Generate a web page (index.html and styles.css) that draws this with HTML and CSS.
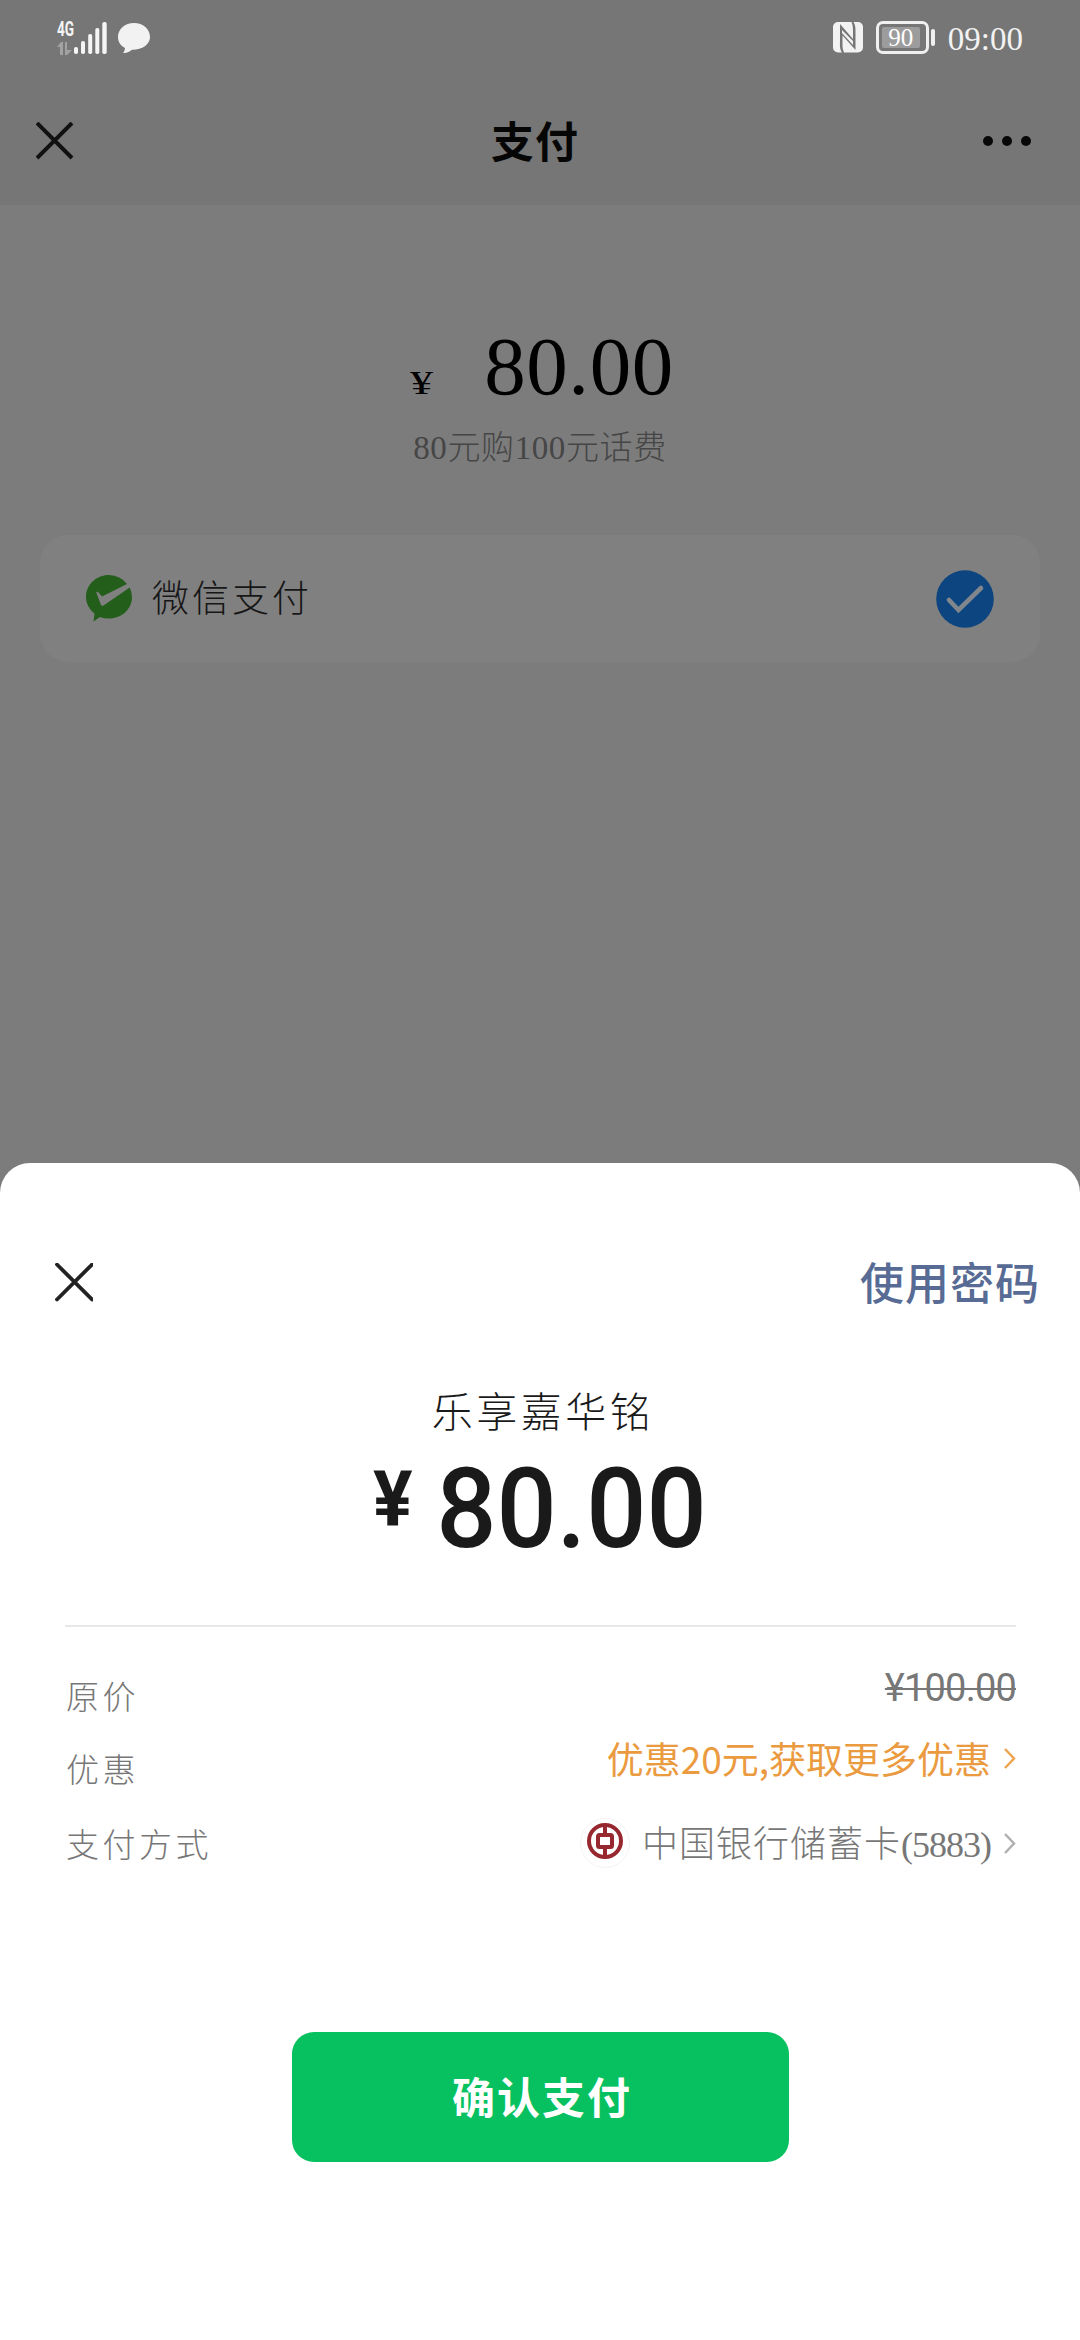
FILE: index.html
```html
<!DOCTYPE html>
<html lang="zh-CN">
<head>
<meta charset="utf-8">
<title>支付</title>
<link rel="stylesheet" href="styles.css">
</head>
<body>
<div class="screen">
  <header class="top">
    <div class="status">
      <div class="status-left">
        <div class="network">
          <span class="network-type">4G</span>
          <svg class="network-arrows" width="15" height="13" viewBox="0 0 15 13"><path d="M0 5 4 0h2v13H3V5zM8 0h2v8h5l-5 5H8z" fill="#a2a2a2"/></svg>
        </div>
        <svg class="bars" width="33" height="32" viewBox="0 0 33 32" fill="#f5f5f5"><rect y="25" width="4" height="7" rx="1.8"/><rect x="7" y="19" width="4" height="13" rx="1.8"/><rect x="14.2" y="12" width="4" height="20" rx="1.8"/><rect x="21.3" y="6" width="4" height="26" rx="1.8"/><rect x="28.3" y="0" width="4.4" height="32" rx="1.8"/></svg>
        <svg class="bubble" width="32" height="31" viewBox="0 0 32 31"><path d="M16 0C7 0 0 6 0 14c0 5 2.500 8.500 7 11-.2 2.200-.8 3.700-2 5 4 .3 6.500-1.200 9-3.200C24 27 32 21.500 32 14 32 6 25 0 16 0z" fill="#f2f2f2"/></svg>
      </div>
      <div class="status-right">
        <svg width="30" height="31" viewBox="0 0 30 31"><path d="M5 0h13.500c1.500 3 1.600 7 1.500 11v6L7 2v16c0 5-.5 9 2 12.500H5a5 5 0 0 1-5-5V5a5 5 0 0 1 5-5zM20.500 0H25a5 5 0 0 1 5 5v20.500a5 5 0 0 1-5 5H11c-1.500-3-1.600-7-1.500-11v-6L22.500 28V12c0-5 .3-8-2-12zM9 8l11 11v4L9 11z" fill="#f2f2f2"/></svg>
        <div class="battery"><div class="battery-level">90</div></div>
        <div class="battery-tip"></div>
        <span class="clock">09:00</span>
      </div>
    </div>
    <nav class="nav">
      <svg width="38" height="38" viewBox="0 0 38 38"><path d="M1 1 36 36M36 1 1 36" stroke="#111" stroke-width="4"/></svg>
      <h1 class="title">支付</h1>
      <svg width="50" height="12" viewBox="0 0 50 12" fill="#080808"><circle cx="7" cy="6" r="5"/><circle cx="26" cy="6" r="5"/><circle cx="45" cy="6" r="5"/></svg>
    </nav>
  </header>

  <main class="order">
    <div class="order-amount"><span class="order-yen">¥</span><span class="order-sum">80.00</span></div>
    <div class="order-name">80元购100元话费</div>
    <div class="method">
      <svg width="46" height="47" viewBox="0 0 46 47"><path d="M23 0a23 22 0 0 1 18 9L16 21.500l-4-4.500c-1-.7-2-.2-1.500 1l4.500 12c.5 1 1.500 1 2.500.4L43.700 12.500A22 22 0 0 1 46 22c0 12-10 21.500-23 21.500-3.500 0-6-.5-9-1.500l-6.500 4.500 1-8C3.500 34.500 0 28.500 0 22 0 10 10 0 23 0z" fill="#235f1b"/></svg>
      <span class="method-name">微信支付</span>
      <svg width="58" height="58" viewBox="0 0 58 58"><circle cx="29" cy="29" r="28.800" fill="#0c457f"/><path d="M13 30 22.500 40 45 18" fill="none" stroke="#80868c" stroke-width="4.600" stroke-linecap="round"/></svg>
    </div>
  </main>

  <section class="sheet">
    <div class="sheet-head">
      <svg width="38" height="40" viewBox="0 0 38 40"><path d="M2 1.500 37 36.500M37 1.500 2 36.500" stroke="#222" stroke-width="3.800" stroke-linecap="round"/></svg>
      <a class="use-password">使用密码</a>
    </div>
    <div class="payee">乐享嘉华铭</div>
    <div class="pay-amount"><span class="pay-yen">¥</span><span class="pay-sum">80.00</span></div>
    <div class="details">
      <div class="row row-price"><span class="label">原价</span><s class="old-price">¥100.00</s></div>
      <div class="row row-discount"><span class="label">优惠</span>
        <span class="value"><span class="discount">优惠20元,获取更多优惠</span><svg class="chevron" width="13" height="23" viewBox="0 0 13 23"><path d="M2 2l9 9.500L2 21" fill="none" stroke="#eda54f" stroke-width="2.500"/></svg></span></div>
      <div class="row row-method"><span class="label">支付方式</span>
        <span class="value">
          <svg class="bank-logo" width="50" height="50" viewBox="0 0 50 50"><circle cx="25" cy="25" r="24.500" fill="#fff" stroke="#f3f3f3"/><circle cx="25" cy="23" r="16" fill="none" stroke="#98282f" stroke-width="4"/><rect x="18" y="17" width="14" height="12" rx="1.500" fill="none" stroke="#98282f" stroke-width="4"/><path d="M25 7v10M25 29v10" stroke="#98282f" stroke-width="4"/></svg>
          <span class="bank">中国银行储蓄卡<span class="card-no">(5883)</span></span><svg class="chevron" width="13" height="23" viewBox="0 0 13 23"><path d="M2 2l9 9.500L2 21" fill="none" stroke="#b0b0b0" stroke-width="2.500"/></svg></span></div>
    </div>
    <button class="confirm">确认支付</button>
  </section>
</div>
</body>
</html>
```
FILE: styles.css
```css
* { box-sizing: border-box; }
body {
  margin: 0;
  background: #7c7c7c;
  font-family: "Noto Sans CJK SC", sans-serif;
}
svg { display: block; flex: none; }
.screen {
  width: 1080px;
  height: 2340px;
  display: flex;
  flex-direction: column;
  overflow: hidden;
}

.top { height: 205px; background: #767676; }
.status {
  height: 76px;
  padding: 0 57px;
  display: flex;
  justify-content: space-between;
}
.status-left { display: flex; padding-top: 22px; }
.network { width: 17px; height: 33px; display: flex; flex-direction: column; justify-content: space-between; }
.network-type {
  font: 700 20px/15px "Roboto", sans-serif;
  color: #f5f5f5;
  transform: scaleX(.68);
  transform-origin: left;
}
.bubble { margin: 1px 0 0 11px; }
.status-right { display: flex; align-items: center; height: 75px; }
.battery {
  width: 53px;
  height: 33px;
  margin-left: 13px;
  padding: 3px;
  border: 3px solid #f0f0f0;
  border-radius: 7px;
}
.battery-level {
  width: 38px;
  height: 21px;
  border-radius: 2px;
  background: #9c9c9c;
  color: #fff;
  text-align: center;
  font: 25px/22px "Liberation Serif", serif;
}
.battery-tip { width: 4px; height: 17px; margin: 0 13px 0 2px; border-radius: 2px; background: #f0f0f0; }
.clock { font: 33px/40px "Liberation Serif", serif; color: #f2f2f2; padding-top: 2px; }
.nav {
  height: 129px;
  padding: 0 49px 0 36px;
  display: flex;
  align-items: center;
  justify-content: space-between;
}
.title { margin: 0; padding: 0 0 3px 15px; font-size: 43px; line-height: 60px; font-weight: 700; letter-spacing: 1px; color: #060606; }

.order { height: 958px; padding: 123px 40px 0; }
.order-amount { height: 80px; display: flex; justify-content: center; margin-left: 4px; font-family: "Liberation Serif", serif; }
.order-yen { width: 23px; font-size: 33px; line-height: 110px; margin-right: 51px; transform: scaleX(1.4); transform-origin: left; }
.order-sum { font-size: 83px; line-height: 77px; letter-spacing: .6px; }
.order-name {
  margin-top: 20px;
  text-align: center;
  font: 300 33px/40px "Liberation Serif", "Noto Sans CJK SC", serif;
  letter-spacing: .6px;
  color: #464646;
}
.method {
  height: 127px;
  margin-top: 67px;
  padding: 0 46px;
  display: flex;
  align-items: center;
  background: #808080;
  border-radius: 28px;
}
.method-name { flex: 1; margin-left: 20px; padding-bottom: 6px; font-size: 37px; font-weight: 300; letter-spacing: 3px; line-height: 50px; color: #161616; }

.sheet { flex: 1; background: #fff; border-radius: 30px 30px 0 0; padding: 90px 64px 0; }
.sheet-head { height: 60px; margin: 0 -24px 0 -9px; display: flex; align-items: center; justify-content: space-between; }
.use-password { font-size: 44px; font-weight: 500; line-height: 60px; padding-bottom: 4px; letter-spacing: 1px; color: #576b95; }
.payee { margin: 66px 0 2px 6px; text-align: center; font-size: 41px; line-height: 60px; font-weight: 300; letter-spacing: 3.500px; color: #1a1a1a; }
.pay-amount { display: flex; justify-content: center; height: 186px; margin-left: 1px; font-family: "Roboto", sans-serif; font-weight: 500; color: #1a1a1a; border-bottom: 2px solid #e8e8e8; }
.pay-yen { font-size: 77px; line-height: 118px; font-weight: 700; width: 63px; transform: translateX(6px) scaleX(.96); transform-origin: left; }
.pay-sum { font-size: 111px; line-height: 136px; transform: scaleX(.955); }
.row { display: flex; justify-content: space-between; color: #777; }
.label { font-size: 33px; line-height: 40px; font-weight: 300; letter-spacing: 3.500px; padding-left: 2px; }
.row-price { padding-top: 48px; height: 107px; }
.old-price { font: 38px/40px "Roboto", sans-serif; letter-spacing: -.8px; text-decoration-thickness: 2px; margin-top: -7px; }
.row-discount { height: 76px; padding-top: 14px; }
.row-discount .value { margin-top: -10px; }
.row-method { height: 81px; padding-top: 13px; }
.value { display: flex; align-items: center; height: 40px; }
.discount { font-size: 37px; line-height: 40px; color: #eb9b3f; }
.chevron { margin: 0 0 0 12px; }
.bank-logo { margin-right: 12px; }
.bank { font-size: 36px; line-height: 40px; font-weight: 300; letter-spacing: 1px; }
.card-no { font-family: "Liberation Serif", serif; font-weight: 400; letter-spacing: -1px; }
.confirm {
  display: block;
  width: 497px;
  height: 130px;
  margin: 141px auto 0;
  padding: 0 0 4px 4px;
  border: 0;
  border-radius: 22px;
  background: #07c160;
  color: #fff;
  font: 700 43px/60px "Noto Sans CJK SC", sans-serif;
  letter-spacing: 2px;
}
```
